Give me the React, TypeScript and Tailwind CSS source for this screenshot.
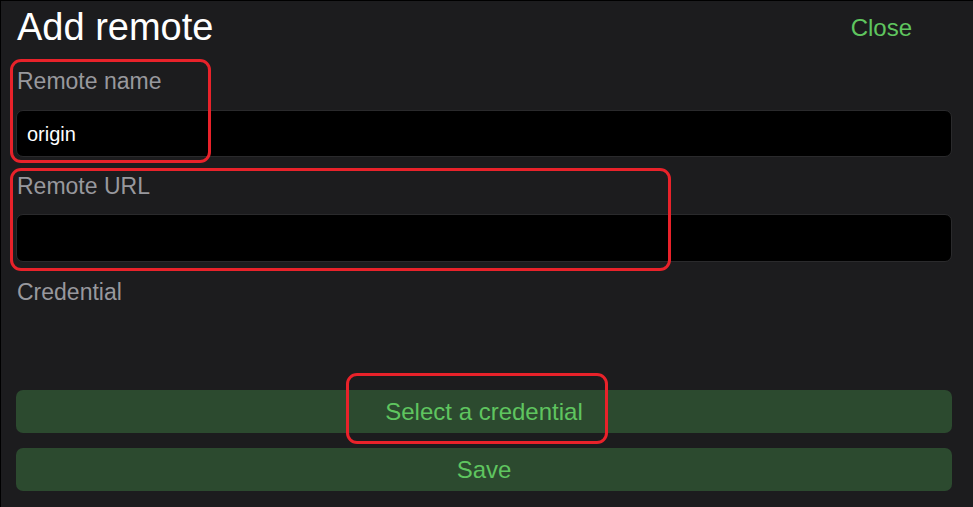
import React from "react";

export default function App() {
  const font = { fontFamily: '"Liberation Sans", Arial, sans-serif' };
  return (
    <div
      className="relative w-[973px] h-[507px] overflow-hidden bg-[#1c1c1e] border-t border-l border-black"
      style={font}
    >
      <div className="flex flex-col pl-[15px] pr-[21px] pt-[4px]">
        <div className="flex items-start justify-between">
          <h1 className="text-[38px] leading-[44px] text-white font-normal pl-[1px]">Add remote</h1>
          <button className="mt-[9px] mr-[40px] text-[24px] leading-[28px] text-[#5fc55f]">Close</button>
        </div>

        <label className="mt-[18px] pl-[1px] text-[23px] leading-[28px] text-[#98989d]">Remote name</label>
        <div className="mt-[15px] h-[47px] rounded-[7px] bg-black border border-[#2a2a2c] flex items-center pl-[10px]">
          <span className="text-[20px] leading-[46px] text-white">origin</span>
        </div>

        <label className="mt-[15px] pl-[1px] text-[23px] leading-[28px] text-[#98989d]">Remote URL</label>
        <div className="mt-[14px] h-[48px] rounded-[7px] bg-black border border-[#2a2a2c]"></div>

        <label className="mt-[16px] pl-[1px] text-[23px] leading-[28px] text-[#98989d]">Credential</label>

        <button className="mt-[84px] h-[43px] rounded-[7px] bg-[#2c4a2f] text-[24px] leading-[43px] text-[#5fc55f] text-center">
          Select a credential
        </button>
        <button className="mt-[15px] h-[43px] rounded-[7px] bg-[#2c4a2f] text-[24px] leading-[43px] text-[#5fc55f] text-center">
          Save
        </button>
      </div>

      {/* red annotation outlines */}
      <div className="absolute left-[9px] top-[58px] w-[201px] h-[104px] rounded-[11px] border-[3px] border-[#e8222a] pointer-events-none" />
      <div className="absolute left-[9px] top-[167px] w-[661px] h-[103px] rounded-[11px] border-[3px] border-[#e8222a] pointer-events-none" />
      <div className="absolute left-[345px] top-[372px] w-[262px] h-[71px] rounded-[11px] border-[3px] border-[#e8222a] pointer-events-none" />
    </div>
  );
}
